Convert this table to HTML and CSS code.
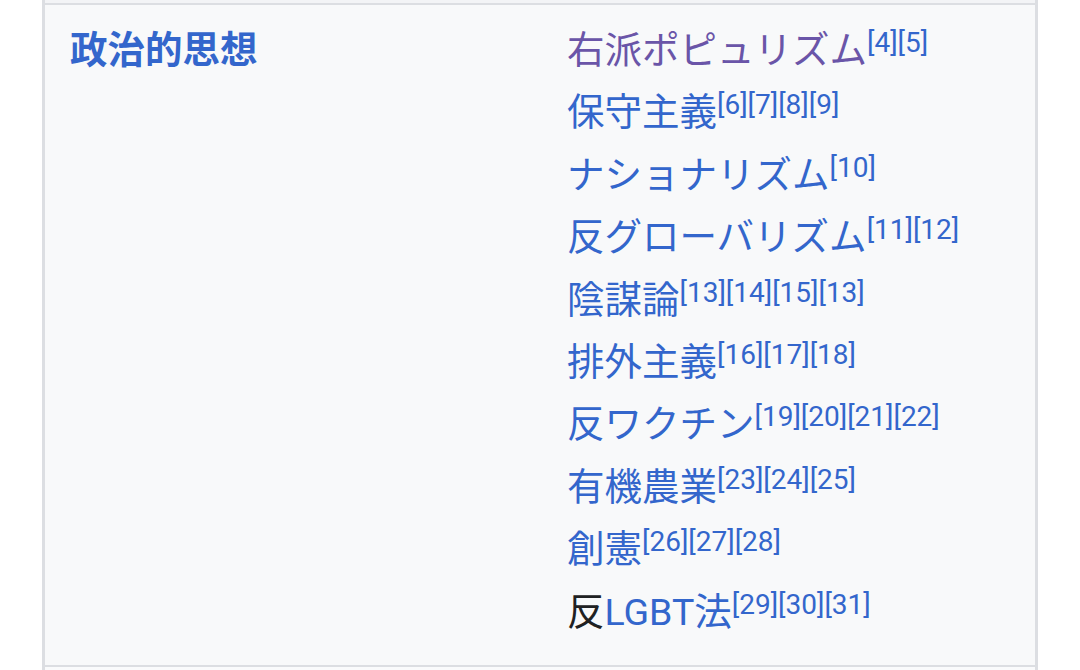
FILE: index.html
```html
<!DOCTYPE html>
<html lang="ja">
<head>
<meta charset="utf-8">
<link rel="stylesheet" href="styles.css">
</head>
<body>
<div class="infobox">
  <div class="stub stub-top"></div>
  <div class="row">
    <div class="label"><a class="link">政治的思想</a></div>
    <ul class="values">
      <li><a class="link visited">右派ポピュリズム</a><sup>[4][5]</sup></li>
      <li><a class="link">保守主義</a><sup>[6][7][8][9]</sup></li>
      <li><a class="link">ナショナリズム</a><sup>[10]</sup></li>
      <li><a class="link">反グローバリズム</a><sup>[11][12]</sup></li>
      <li><a class="link">陰謀論</a><sup>[13][14][15][13]</sup></li>
      <li><a class="link">排外主義</a><sup>[16][17][18]</sup></li>
      <li><a class="link">反ワクチン</a><sup>[19][20][21][22]</sup></li>
      <li><a class="link">有機農業</a><sup>[23][24][25]</sup></li>
      <li><a class="link">創憲</a><sup>[26][27][28]</sup></li>
      <li><span class="plain">反</span><a class="link">LGBT法</a><sup>[29][30][31]</sup></li>
    </ul>
  </div>
  <div class="stub stub-bottom"></div>
</div>
</body>
</html>
```
FILE: styles.css
```css
html, body {
  margin: 0;
  padding: 0;
  background: #ffffff;
}
body {
  font-family: Roboto, "Noto Sans CJK JP", sans-serif;
  font-size: 37.5px;
  color: #202122;
}
.infobox {
  margin-left: 42px;
  width: 996px;
  box-sizing: border-box;
  border-left: 3px solid #dcdee2;
  border-right: 3px solid #dcdee2;
  background: #f8f9fa;
}
.stub-top {
  height: 3px;
  background: #f3f4f6;
  border-bottom: 2px solid #dcdee2;
}
.stub-bottom {
  height: 3px;
  border-top: 2px solid #dcdee2;
  background: #fafbfc;
}
.row {
  display: grid;
  grid-template-columns: 522px 1fr;
  padding: 14px 0 22px;
}
.label {
  padding-left: 25px;
  font-weight: 700;
  line-height: 62.4px;
}
.values {
  list-style: none;
  margin: 0;
  padding: 0;
}
.values li {
  line-height: 62.4px;
  height: 62.4px;
  white-space: nowrap;
}
.link {
  color: #3366cc;
}
.visited {
  color: #6a55a8;
}
.plain {
  color: #202122;
}
sup {
  font-size: 28px;
  line-height: 0;
  vertical-align: 11px;
  color: #3366cc;
}
```
